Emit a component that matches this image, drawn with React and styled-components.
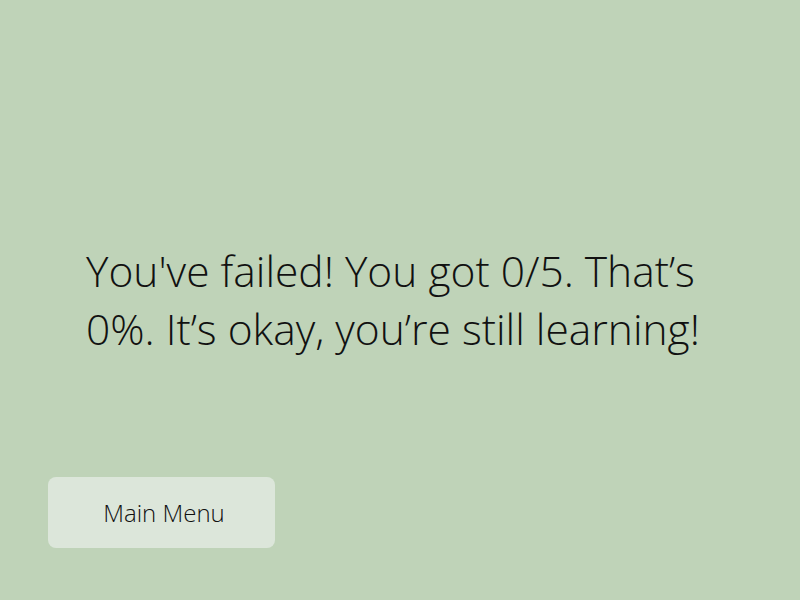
import React from "react";
import styled, { createGlobalStyle } from "styled-components";

const GlobalStyle = createGlobalStyle`
  html, body {
    margin: 0;
    padding: 0;
    background: #bfd3b8;
    font-family: "Open Sans", "Liberation Sans", sans-serif;
  }
`;

const Page = styled.div`
  width: 800px;
  height: 600px;
  box-sizing: border-box;
  padding: 242px 48px 0;
  display: flex;
  flex-direction: column;
`;

const Message = styled.p`
  margin: 0 0 0 38px;
  width: 650px;
  font-size: 42.5px;
  font-weight: 300;
  line-height: 58px;
  color: #111;
`;

const MenuButton = styled.button`
  margin-top: 119px;
  width: 227px;
  height: 71px;
  padding: 0 0 0 5px;
  border: none;
  border-radius: 8px;
  background: #dce6da;
  font-family: "Open Sans", sans-serif;
  font-size: 24px;
  font-weight: 300;
  color: #111;
  cursor: pointer;
`;

function App() {
  return (
    <>
      <GlobalStyle />
      <Page>
        <Message>
          You've failed! You got 0/5. That’s 0%. It’s okay, you’re still
          learning!
        </Message>
        <MenuButton>Main Menu</MenuButton>
      </Page>
    </>
  );
}

export default App;
